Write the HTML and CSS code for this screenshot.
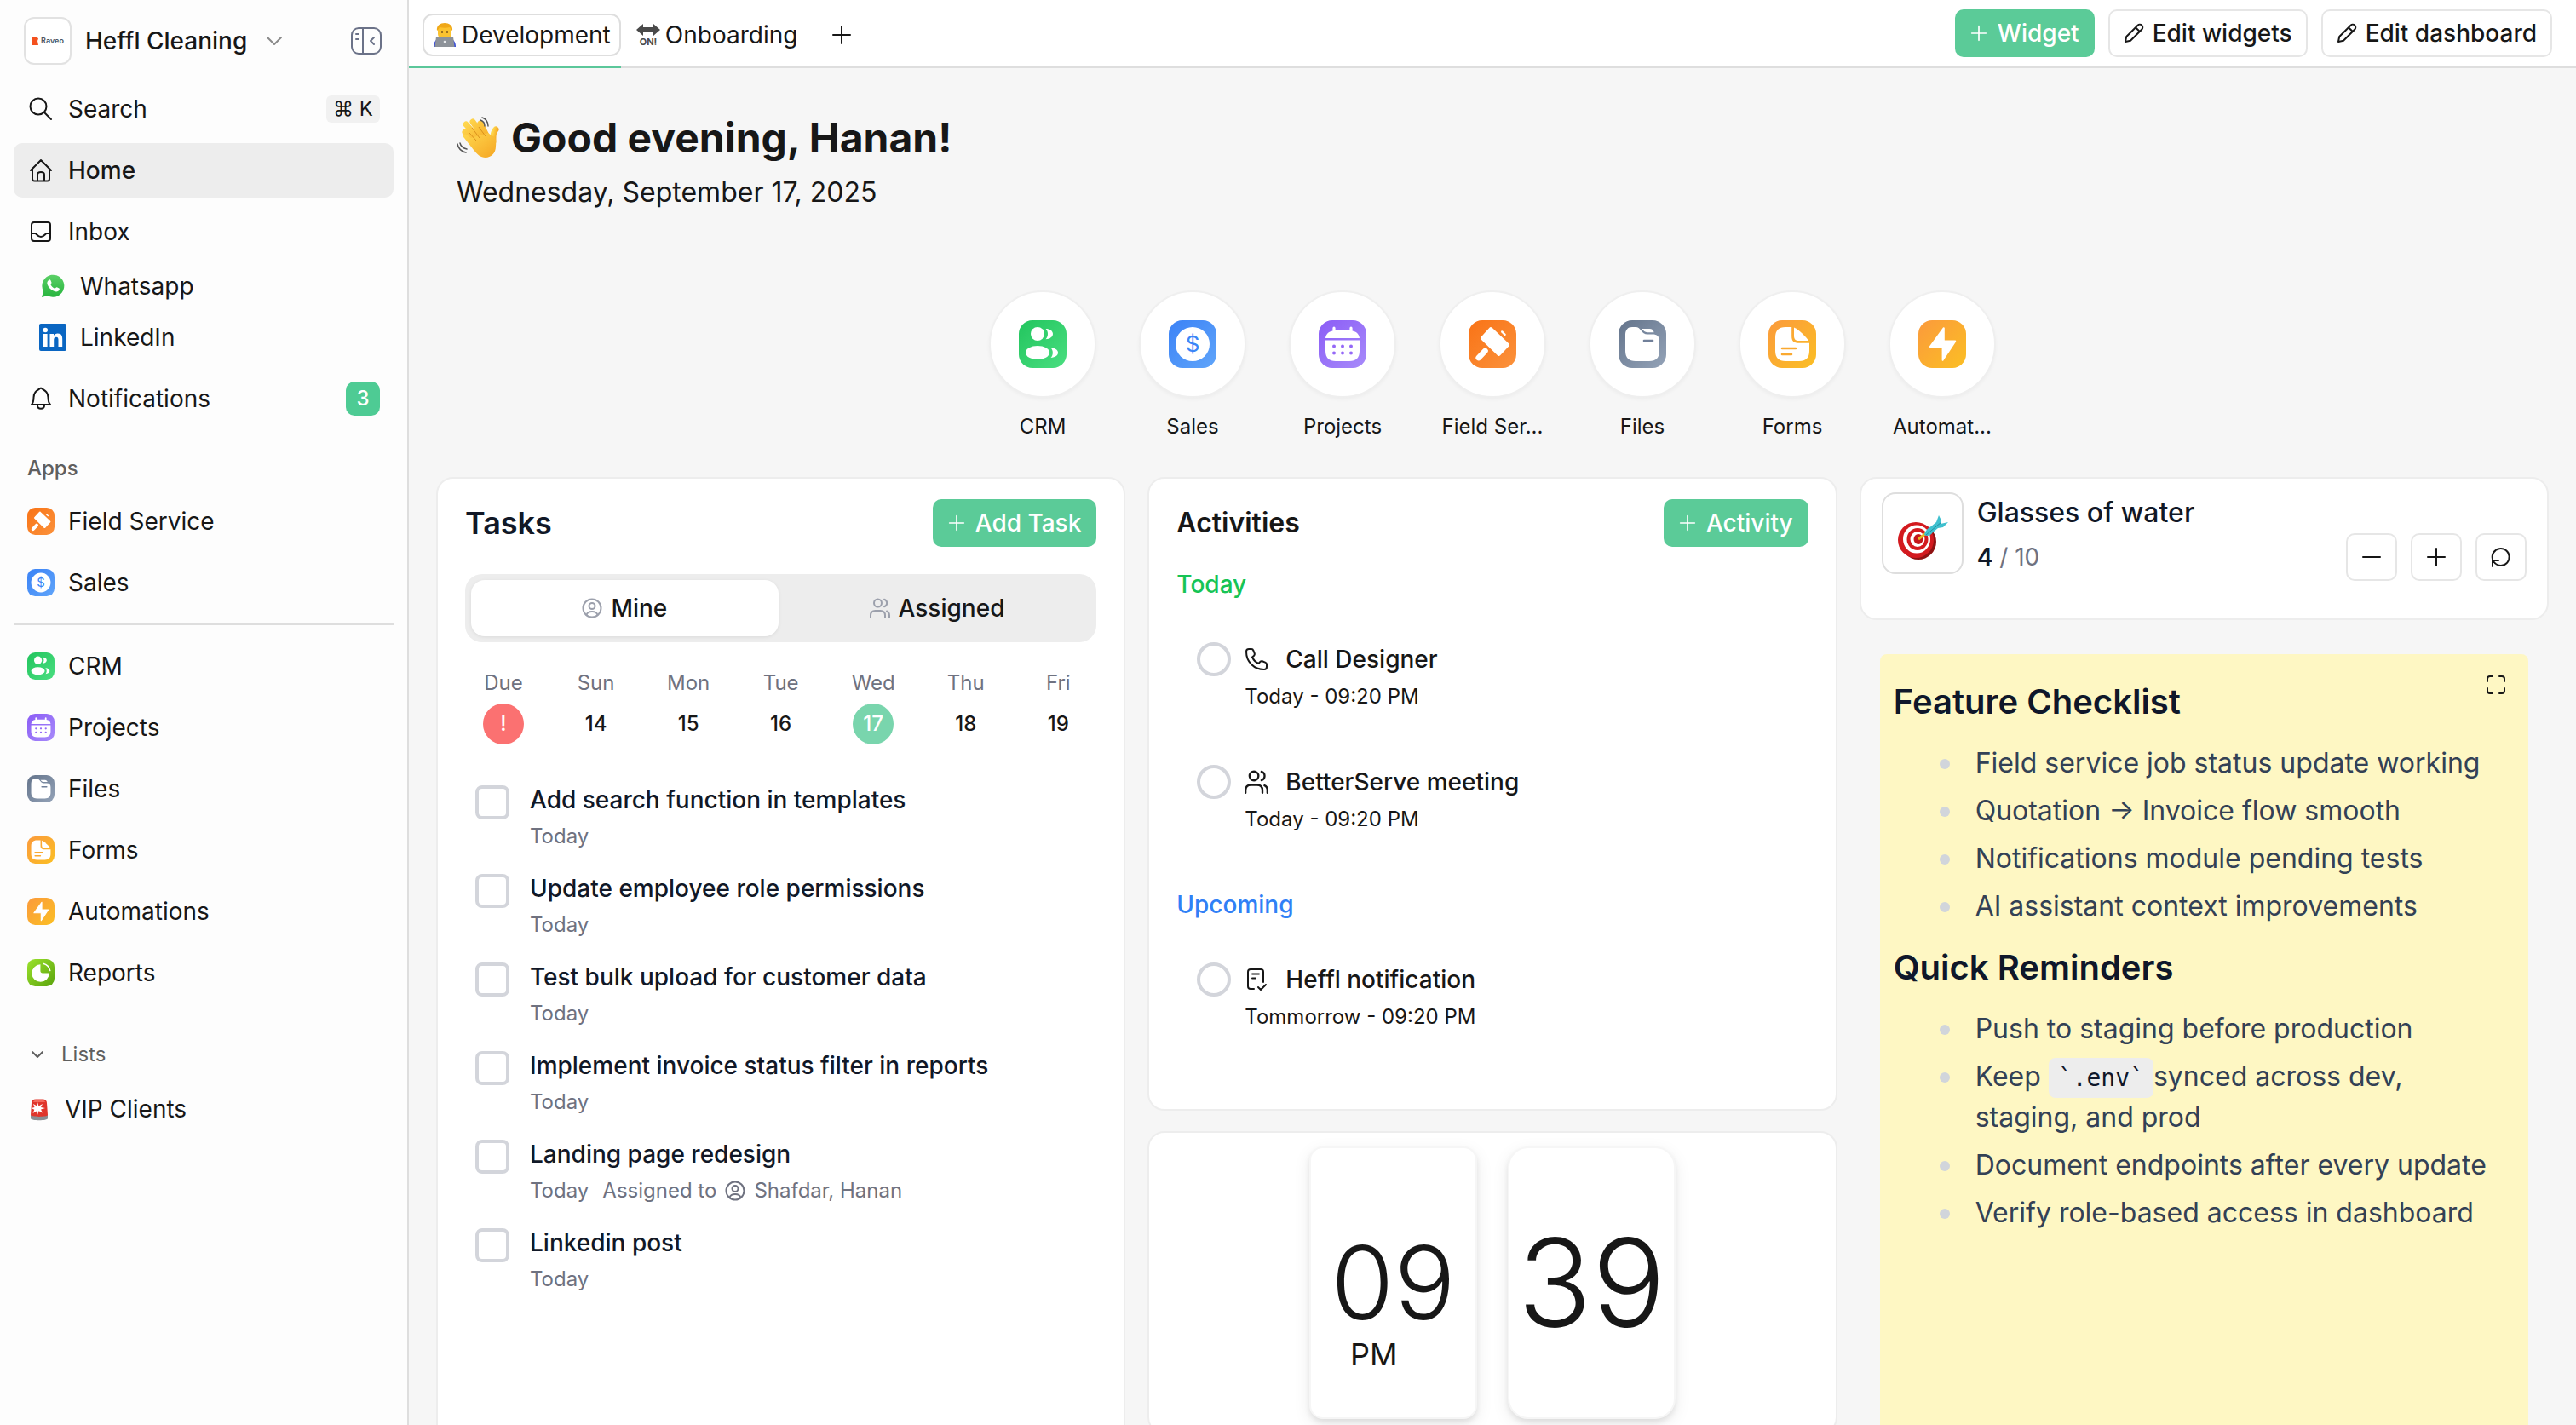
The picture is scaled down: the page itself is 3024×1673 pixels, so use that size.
FILE: index.html
```html
<!DOCTYPE html>
<html lang="en">

<head>
    <meta charset="UTF-8">
    <meta name="viewport" content="width=device-width, initial-scale=1.0">
    <title>Heffl Cleaning - Home</title>
    <link rel="stylesheet" href="styles.css">
</head>

<body>
    <!-- Shared icons -->
    <svg class="sprite" aria-hidden="true">
        <defs>
            <linearGradient id="g-green" x1="0" y1="0" x2="1" y2="1"><stop offset="0" stop-color="#22c55e"/><stop offset="1" stop-color="#4ade80"/></linearGradient>
            <linearGradient id="g-blue" x1="0" y1="0" x2="1" y2="1"><stop offset="0" stop-color="#3b82f6"/><stop offset="1" stop-color="#60a5fa"/></linearGradient>
            <linearGradient id="g-purple" x1="0" y1="0" x2="1" y2="1"><stop offset="0" stop-color="#8b5cf6"/><stop offset="1" stop-color="#a78bfa"/></linearGradient>
            <linearGradient id="g-orange" x1="0" y1="0" x2="1" y2="1"><stop offset="0" stop-color="#f97316"/><stop offset="1" stop-color="#fb923c"/></linearGradient>
            <linearGradient id="g-slate" x1="0" y1="0" x2="1" y2="1"><stop offset="0" stop-color="#64748b"/><stop offset="1" stop-color="#94a3b8"/></linearGradient>
            <linearGradient id="g-amber" x1="0" y1="0" x2="1" y2="1"><stop offset="0" stop-color="#fb9a3c"/><stop offset="1" stop-color="#fbbf24"/></linearGradient>
            <linearGradient id="g-lime" x1="0" y1="0" x2="1" y2="1"><stop offset="0" stop-color="#9be22d"/><stop offset="1" stop-color="#5ba30d"/></linearGradient>
            <linearGradient id="g-wa" x1="0" y1="0" x2="0" y2="1"><stop offset="0" stop-color="#5bd066"/><stop offset="1" stop-color="#27b43e"/></linearGradient>
            <linearGradient id="g-hand" x1="0" y1="0" x2="1" y2="1"><stop offset="0" stop-color="#ffd84f"/><stop offset="1" stop-color="#f5a623"/></linearGradient>
        </defs>
        <symbol id="app-crm" viewBox="0 0 28 28">
            <rect width="28" height="28" rx="8" fill="url(#g-green)"/>
            <g fill="#fff"><circle cx="11" cy="8" r="4"/><ellipse cx="11" cy="19" rx="7" ry="4"/>
            <path d="M15.800 5c2.400 0 4.200 1.300 4.200 3s-1.800 3.100-4.200 3.100c.8-.9 1.200-2 1.200-3.100s-.4-2.200-1.200-3z"/><path d="M18.600 16c2.600.2 4.400 1.400 4.400 3s-1.600 2.700-4.200 3c.8-.8 1.100-1.900 1.100-3s-.4-2.200-1.300-3z"/></g>
        </symbol>
        <symbol id="app-sales" viewBox="0 0 28 28">
            <rect width="28" height="28" rx="8" fill="url(#g-blue)"/>
            <circle cx="14" cy="14" r="10" fill="#fff"/>
            <text x="14" y="18.600" text-anchor="middle" font-size="13" fill="#3b86f7">$</text>
        </symbol>
        <symbol id="app-projects" viewBox="0 0 28 28">
            <rect width="28" height="28" rx="8" fill="url(#g-purple)"/>
            <path fill="#fff" d="M8.200 6.200V4.600a.8.8 0 0 1 1.600 0V6h8.400V4.600a.8.8 0 0 1 1.600 0v1.600c2.400.4 3.900 1.800 4.200 4.300H4c.3-2.500 1.800-3.900 4.200-4.300zM4 11.800h20V18c0 4-2 6-6 6h-8c-4 0-6-2-6-6z"/>
            <g fill="#9568f7"><circle cx="9" cy="15.200" r="1"/><circle cx="14" cy="15.200" r="1"/><circle cx="19" cy="15.200" r="1"/><circle cx="9" cy="19.200" r="1"/><circle cx="14" cy="19.200" r="1"/><circle cx="19" cy="19.200" r="1"/></g>
        </symbol>
        <symbol id="app-field" viewBox="0 0 28 28">
            <rect width="28" height="28" rx="8" fill="url(#g-orange)"/>
            <path fill="#fff" stroke="#fff" stroke-width="2" stroke-linejoin="round" d="M13 5l10 9.500-5.200 5.500L8 10.500z"/>
            <path stroke="#fff" stroke-width="3.400" stroke-linecap="round" d="M5.900 22l3.800-4"/>
            <path stroke="#fff" stroke-width="1.200" stroke-linecap="round" d="M19.600 6.700l1.700 1.700"/>
        </symbol>
        <symbol id="app-files" viewBox="0 0 28 28">
            <rect width="28" height="28" rx="8" fill="url(#g-slate)"/>
            <path fill="#fff" d="M4 8.500C4 5.700 5.400 4 8 4h2c3.300 0 3.300 4.300 7 4.300h3c2.600 0 4 1.300 4 4V18c0 4-2 6-6 6h-8c-4 0-6-2-6-6z"/>
            <path fill="#fff" d="M13.600 5h4.600c1.400 0 2.300.8 2.600 2.100H17c-1.500 0-2.400-1-3.400-2.100z"/>
            <path stroke="#71809a" stroke-width="1.300" stroke-linecap="round" d="M15 12h5"/>
        </symbol>
        <symbol id="app-forms" viewBox="0 0 28 28">
            <rect width="28" height="28" rx="8" fill="url(#g-amber)"/>
            <path fill="#fff" d="M13.600 4H10C6 4 4 6 4 10v8c0 4 2 6 6 6h8c4 0 6-2 6-6v-4.600h-6.200c-2.800 0-4.200-1-4.200-4z"/>
            <path fill="#fff" d="M15 4.200v4.800c0 2.200.8 3 3 3h5.600c-1.400-2.200-6.200-6.900-8.600-7.800z"/>
            <path stroke="#faa930" stroke-width="1.300" stroke-linecap="round" d="M8 16.500h8M8 20h5.500"/>
        </symbol>
        <symbol id="app-auto" viewBox="0 0 28 28">
            <rect width="28" height="28" rx="8" fill="url(#g-amber)"/>
            <path fill="#fff" stroke="#fff" stroke-linejoin="round" d="M14.900 4.600v7.700h6.700l-7.300 11.100v-7.900H6.900z"/>
        </symbol>
        <symbol id="app-reports" viewBox="0 0 28 28">
            <rect width="28" height="28" rx="8" fill="url(#g-lime)"/>
            <path fill="#fff" d="M13.500 5.500v6.800c0 1.300.9 2.200 2.200 2.200h7A9 9 0 1 1 13.500 5.500z"/>
            <path fill="none" stroke="#fff" stroke-width="1.200" stroke-linecap="round" d="M16.300 4.600c3.800.9 6.300 3.500 7.200 7.300"/>
        </symbol>
        <symbol id="i-plus" viewBox="0 0 24 24"><path d="M12 2v20M2 12h20"/></symbol>
        <symbol id="i-user" viewBox="0 0 24 24"><circle cx="12" cy="12" r="10.500"/><circle cx="12" cy="9.500" r="3.500"/><path d="M5.500 20c.8-3 3-4 6.500-4s5.700 1 6.500 4"/></symbol>
        <symbol id="i-users" viewBox="0 0 24 24"><circle cx="9.500" cy="6" r="4.500"/><path d="M1 23v-2.500c0-3.500 2-5.500 5.500-5.500h6c3.500 0 5.500 2 5.500 5.500V23M17 1.700a4.500 4.500 0 0 1 0 8.600M20 15.500c2 .8 3 2.500 3 5V23"/></symbol>
        <symbol id="i-pencil" viewBox="0 0 24 24"><path d="M2 22l1.200-6L16.500 2.700a3.300 3.300 0 0 1 4.800 4.800L8 20.800zM14 5.200l4.800 4.800"/></symbol>
    </svg>

    <div class="app">
        <!-- Sidebar -->
        <aside class="sidebar">
            <div class="workspace">
                <span class="logo">
                    <svg width="8" height="10" viewBox="0 0 8 10"><path fill="#f4511e" d="M0 0h6l2 2.500L7 5l1 5H0z"/></svg>
                    Raveo
                </span>
                <button class="workspace-name">Heffl Cleaning
                    <svg class="line muted" width="20" height="12" viewBox="0 0 20 12"><path d="M2 2l8 8 8-8"/></svg>
                </button>
                <button class="collapse" aria-label="Collapse sidebar">
                    <svg class="line" width="36" height="32" viewBox="0 0 36 32"><rect x="1" y="1" width="34" height="30" rx="8"/><path d="M14 1v30M6 8h3M6 14h3M27 12l-4 4 4 4"/></svg>
                </button>
            </div>
            <nav class="group">
                <a class="row" href="#">
                    <svg class="line" width="32" height="32" viewBox="0 0 32 32"><circle cx="13" cy="13" r="9.500"/><path d="M20 20l8 8"/></svg>
                    Search <kbd>⌘ K</kbd>
                </a>
                <a class="row active" href="#">
                    <svg class="line" width="32" height="32" viewBox="0 0 32 32"><path d="M4 16L16 4l12 12M6 14v12c0 1.500 1 2.500 2.500 2.500h15c1.500 0 2.500-1 2.500-2.500V14M12 28v-7c0-2 1-3 4-3s4 1 4 3v7"/></svg>
                    Home
                </a>
                <a class="row" href="#">
                    <svg class="line" width="32" height="32" viewBox="0 0 32 32"><rect x="5" y="5" width="22" height="22" rx="3"/><path d="M5 18h4c2 0 3 4 7 4s5-4 7-4h4"/></svg>
                    Inbox
                </a>
            </nav>
            <nav class="group subgroup">
                <a class="row" href="#">
                    <svg width="32" height="32" viewBox="0 0 32 32"><path fill="url(#g-wa)" d="M3 29l2-7A13 13 0 1 1 10 27z"/><path fill="#fff" d="M11 9c1-1 2-.8 2.500.3l1 2.400c.3.800-1.300 1.900-1 2.500 1 2.200 2.700 3.700 4.800 4.600.7.200 1.600-1.900 2.500-1.500l2.600 1.300c.9.500.4 1.700-.1 2.500-1.400 1.600-3.600 1.700-6 .7-4-1.700-6.500-4.600-7.800-8-.5-2 .2-3.700 1.500-4.800z"/></svg>
                    Whatsapp
                </a>
                <a class="row" href="#">
                    <svg width="32" height="32" viewBox="0 0 32 32"><rect width="32" height="32" rx="2" fill="#0a66c2"/><g fill="#fff"><circle cx="7.200" cy="7.500" r="2.800"/><path d="M4.800 12h4.800v15H4.800zM12.500 12H17v2.100c.8-1.500 2.600-2.500 4.800-2.500 4.400 0 5.400 2.900 5.400 6.700V27h-4.700v-7.600c0-1.900-.3-3.600-2.500-3.600s-2.800 1.700-2.800 3.700V27h-4.700z"/></g></svg>
                    LinkedIn
                </a>
            </nav>
            <nav class="group">
                <a class="row" href="#">
                    <svg class="line" width="32" height="32" viewBox="0 0 32 32"><path d="M5 23h22c-2.500-2.500-2.500-5-2.500-8.500C24.500 8 20.500 6.500 16 3.500 11.500 6.500 7.500 8 7.500 14.500c0 3.500 0 6-2.500 8.500zM12 24c0 5 8 5 8 0"/></svg>
                    Notifications <span class="badge">3</span>
                </a>
            </nav>
            <h2 class="side-title">Apps</h2>
            <nav class="group">
                <a class="row" href="#"><svg width="32" height="32"><use href="#app-field"/></svg>Field Service</a>
                <a class="row" href="#"><svg width="32" height="32"><use href="#app-sales"/></svg>Sales</a>
            </nav>
            <hr>
            <nav class="group">
                <a class="row" href="#"><svg width="32" height="32"><use href="#app-crm"/></svg>CRM</a>
                <a class="row" href="#"><svg width="32" height="32"><use href="#app-projects"/></svg>Projects</a>
                <a class="row" href="#"><svg width="32" height="32"><use href="#app-files"/></svg>Files</a>
                <a class="row" href="#"><svg width="32" height="32"><use href="#app-forms"/></svg>Forms</a>
                <a class="row" href="#"><svg width="32" height="32"><use href="#app-auto"/></svg>Automations</a>
                <a class="row" href="#"><svg width="32" height="32"><use href="#app-reports"/></svg>Reports</a>
            </nav>
            <button class="lists-toggle">
                <svg class="line" width="16" height="10" viewBox="0 0 16 10"><path d="M2 2l6 6 6-6"/></svg>
                Lists
            </button>
            <nav class="group">
                <a class="row" href="#">
                    <svg width="28" height="28" viewBox="0 0 28 28"><path fill="#8b8f94" d="M4 21h20v4c0 3-20 3-20 0z"/><path fill="#e0352b" d="M5 7c0-3 2-4.500 5-4.500h8c3 0 5 1.500 5 4.500l1 14c0 2.500-20 2.500-20 0z"/><path fill="#f4685c" d="M7 6c.4-1.600 2-2.200 4-2.200h6c2 0 3.600.6 4 2.200z"/><path fill="#fff" d="M12 6l1.500 4.500L18 8l-2 4 5 1-5 1.500 2 4-4.500-2.300L12 21l-1.200-4.500L6.500 19l1.800-4.200L4.500 13l4-1L7 8l4 2.300z"/></svg>
                    VIP Clients
                </a>
            </nav>
        </aside>

        <main class="main">
            <!-- Dashboard tabs -->
            <header class="topbar">
                <div class="tabs">
                    <div class="tab-wrap">
                        <button class="tab selected">
                            <svg width="28" height="28" viewBox="0 0 28 28"><path fill="#3b4fd8" d="M1 28c0-6 3-9 6-10h14c3 1 6 4 6 10z"/><rect x="6" y="2" width="16" height="17" rx="6" fill="#fcc32f"/><path fill="#f0a818" d="M5 9C4 3 9 0 14 0s10 3 9 9c-2-1-2-3-3-4-4 1-8 1-12 0-1 1-1 3-3 4z"/><circle cx="11" cy="10.500" r="1.200" fill="#5a3b12"/><circle cx="17" cy="10.500" r="1.200" fill="#5a3b12"/><path fill="#8d9299" d="M4 16h20l1.500 12h-23z"/><circle cx="14" cy="22" r="1.300" fill="#e6e8ea"/></svg>
                            Development
                        </button>
                    </div>
                    <button class="tab">
                        <svg width="28" height="28" viewBox="0 0 28 28"><path fill="#4a4a4a" d="M0 8l8-7v4h12V1l8 7-8 7v-4H8v4z"/><text x="14" y="26" text-anchor="middle" font-size="11" font-weight="700" fill="#4a4a4a">ON!</text></svg>
                        Onboarding
                    </button>
                    <button class="tab-add" aria-label="Add dashboard"><svg class="line" width="24" height="24"><use href="#i-plus"/></svg></button>
                </div>
                <div class="actions">
                    <button class="btn primary"><svg class="line" width="20" height="20"><use href="#i-plus"/></svg>Widget</button>
                    <button class="btn"><svg class="line" width="24" height="24"><use href="#i-pencil"/></svg>Edit widgets</button>
                    <button class="btn"><svg class="line" width="24" height="24"><use href="#i-pencil"/></svg>Edit dashboard</button>
                </div>
            </header>

            <!-- Greeting -->
            <section class="greeting">
                <h1>
                    <svg width="50" height="50" viewBox="0 0 50 50"><g fill="none" stroke="url(#g-hand)" stroke-linecap="round"><path stroke-width="7" d="M10 18l15 16M11 9l17 19M19 6l14 20M28 8l9 18"/><path stroke-width="7" d="M46 15c-4 4-3 9-3 14"/></g><path fill="url(#g-hand)" d="M9 25c-3-3 1-6 4-3l4 3 20-6 5 4c3-1 5 4 4 12 0 8-6 13-12 13-6 0-10-4-14-9z"/><g fill="none" stroke="#d9901c"><path d="M15 19l8 9M18 13l9 12M26 12l8 11"/></g><g fill="none" stroke="#555" stroke-width="1.500" stroke-linecap="round"><path d="M30 1c4 1 7 5 7 10M28 4c3 1 5 4 5 7M1 32c1 5 5 9 10 10M4 31c1 4 4 6 8 7"/></g></svg>
                    Good evening, Hanan!
                </h1>
                <p>Wednesday, September 17, 2025</p>
            </section>

            <nav class="shortcuts">
                <a href="#"><span class="bubble"><svg width="56" height="56"><use href="#app-crm"/></svg></span><span class="label">CRM</span></a>
                <a href="#"><span class="bubble"><svg width="56" height="56"><use href="#app-sales"/></svg></span><span class="label">Sales</span></a>
                <a href="#"><span class="bubble"><svg width="56" height="56"><use href="#app-projects"/></svg></span><span class="label">Projects</span></a>
                <a href="#"><span class="bubble"><svg width="56" height="56"><use href="#app-field"/></svg></span><span class="label">Field Ser...</span></a>
                <a href="#"><span class="bubble"><svg width="56" height="56"><use href="#app-files"/></svg></span><span class="label">Files</span></a>
                <a href="#"><span class="bubble"><svg width="56" height="56"><use href="#app-forms"/></svg></span><span class="label">Forms</span></a>
                <a href="#"><span class="bubble"><svg width="56" height="56"><use href="#app-auto"/></svg></span><span class="label">Automat...</span></a>
            </nav>

            <div class="widgets">
                <!-- Tasks -->
                <section class="card tasks">
                    <div class="card-head">
                        <h2 class="big">Tasks</h2>
                        <button class="btn primary"><svg class="line" width="20" height="20"><use href="#i-plus"/></svg>Add Task</button>
                    </div>
                    <div class="segmented">
                        <button class="on"><svg class="line" width="24" height="24"><use href="#i-user"/></svg>Mine</button>
                        <button><svg class="line" width="24" height="24"><use href="#i-users"/></svg>Assigned</button>
                    </div>
                    <div class="week">
                        <div class="day">Due<span class="late">!</span></div>
                        <div class="day">Sun<span>14</span></div>
                        <div class="day">Mon<span>15</span></div>
                        <div class="day">Tue<span>16</span></div>
                        <div class="day">Wed<span class="today">17</span></div>
                        <div class="day">Thu<span>18</span></div>
                        <div class="day">Fri<span>19</span></div>
                    </div>
                    <ul class="task-list">
                        <li><input type="checkbox" id="t1"><div><label for="t1">Add search function in templates</label><p>Today</p></div></li>
                        <li><input type="checkbox" id="t2"><div><label for="t2">Update employee role permissions</label><p>Today</p></div></li>
                        <li><input type="checkbox" id="t3"><div><label for="t3">Test bulk upload for customer data</label><p>Today</p></div></li>
                        <li><input type="checkbox" id="t4"><div><label for="t4">Implement invoice status filter in reports</label><p>Today</p></div></li>
                        <li><input type="checkbox" id="t5"><div><label for="t5">Landing page redesign</label><p>Today <span class="assignee">Assigned to <svg class="line" width="24" height="24"><use href="#i-user"/></svg> Shafdar, Hanan</span></p></div></li>
                        <li><input type="checkbox" id="t6"><div><label for="t6">Linkedin post</label><p>Today</p></div></li>
                    </ul>
                </section>

                <div class="column">
                    <!-- Activities -->
                    <section class="card activities">
                        <div class="card-head">
                            <h2>Activities</h2>
                            <button class="btn primary"><svg class="line" width="20" height="20"><use href="#i-plus"/></svg>Activity</button>
                        </div>
                        <h3 class="when green">Today</h3>
                        <ul class="activity-list">
                            <li>
                                <input type="checkbox" id="a1">
                                <div>
                                    <label for="a1"><svg class="line" width="28" height="28" viewBox="0 0 28 28"><path d="M2 5c0-2 1.500-3 3-3h3c1.200 0 2 .7 2.400 1.800l1.300 3.400c.4 1.200 0 2-.8 2.700L9 11.500c1.500 3.500 4 6 7.500 7.500l1.600-1.900c.7-.8 1.500-1.200 2.700-.8l3.400 1.300c1.100.4 1.800 1.200 1.800 2.400v3c0 1.500-1 3-3 3C11 26 2 17 2 5z"/></svg>Call Designer</label>
                                    <p>Today - 09:20 PM</p>
                                </div>
                            </li>
                            <li>
                                <input type="checkbox" id="a2">
                                <div>
                                    <label for="a2"><svg class="line" width="28" height="28"><use href="#i-users"/></svg>BetterServe meeting</label>
                                    <p>Today - 09:20 PM</p>
                                </div>
                            </li>
                        </ul>
                        <h3 class="when blue">Upcoming</h3>
                        <ul class="activity-list">
                            <li>
                                <input type="checkbox" id="a3">
                                <div>
                                    <label for="a3"><svg class="line" width="28" height="28" viewBox="0 0 28 28"><path d="M11 25H7c-1.700 0-3-1.300-3-3V5c0-1.700 1.300-3 3-3h12c1.700 0 3 1.300 3 3v12M9 7.500h8M9 12.500h4M16 23l3 3 6-6"/></svg>Heffl notification</label>
                                    <p>Tommorrow - 09:20 PM</p>
                                </div>
                            </li>
                        </ul>
                    </section>

                    <!-- Clock -->
                    <section class="card clock">
                        <div class="flip">
                            <span class="hours">09</span>
                            <span class="period">PM</span>
                        </div>
                        <div class="flip minutes-box">
                            <span class="minutes">39</span>
                        </div>
                    </section>
                </div>

                <div class="column">
                    <!-- Counter -->
                    <section class="card counter">
                        <span class="counter-icon">
                            <svg width="64" height="56" viewBox="0 0 64 56"><ellipse cx="27" cy="34" rx="21" ry="21" fill="#8f1212"/><ellipse cx="24" cy="32" rx="21" ry="21" fill="#d31a1f"/><ellipse cx="25" cy="31" rx="16" ry="16.500" fill="#fff"/><ellipse cx="26" cy="31" rx="12.500" ry="13" fill="#d31a1f"/><ellipse cx="26" cy="31" rx="8.500" ry="9" fill="#fff"/><ellipse cx="27" cy="31" rx="5.500" ry="6" fill="#c5161b"/><path stroke="#e8b923" stroke-width="3" d="M27 31l9-7"/><path fill="#3fc0cf" d="M34 26c1-5 4-8 8-10l6-5 3-8 3 6-1 4 9-2-6 6-6 1-6 5c-3 4-6 5-10 3z"/><path stroke="#1f8fa0" d="M36 26l18-15"/></svg>
                        </span>
                        <div class="counter-text">
                            <h2>Glasses of water</h2>
                            <p><strong>4</strong> / 10</p>
                        </div>
                        <div class="counter-buttons">
                            <button aria-label="Decrease"><svg class="line" width="24" height="24" viewBox="0 0 24 24"><path d="M2 12h20"/></svg></button>
                            <button aria-label="Increase"><svg class="line" width="24" height="24"><use href="#i-plus"/></svg></button>
                            <button aria-label="Reset"><svg class="line" width="24" height="24" viewBox="0 0 24 24"><path d="M2 14.500A10 10 0 1 1 12 22c-3.500 0-6.500-1.500-9-5M2 23v-7h7"/></svg></button>
                        </div>
                    </section>

                    <!-- Sticky note -->
                    <section class="note">
                        <button class="expand" aria-label="Expand note"><svg class="line" width="24" height="24" viewBox="0 0 24 24"><path d="M2 8V5c0-2 1-3 3-3h3M16 2h3c2 0 3 1 3 3v3M22 16v3c0 2-1 3-3 3h-3M8 22H5c-2 0-3-1-3-3v-3"/></svg></button>
                        <h2>Feature Checklist</h2>
                        <ul>
                            <li><span>Field service job status update working</span></li>
                            <li><span>Quotation → Invoice flow smooth</span></li>
                            <li><span>Notifications module pending tests</span></li>
                            <li><span>AI assistant context improvements</span></li>
                        </ul>
                        <h2>Quick Reminders</h2>
                        <ul>
                            <li><span>Push to staging before production</span></li>
                            <li><span>Keep <code>`.env`</code>synced across dev, staging, and prod</span></li>
                            <li><span>Document endpoints after every update</span></li>
                            <li><span>Verify role-based access in dashboard</span></li>
                        </ul>
                    </section>
                </div>
            </div>
        </main>
    </div>
</body>

</html>
```

FILE: styles.css
```css
* {
    box-sizing: border-box;
}

body {
    margin: 0;
    font-family: Inter, "Liberation Sans", sans-serif;
    font-size: 28px;
    line-height: 36px;
    color: #171717;
    background: #f6f6f6;
}

h1, h2, h3, p, ul {
    margin: 0;
    padding: 0;
}

ul {
    list-style: none;
}

a {
    color: inherit;
    text-decoration: none;
}

button {
    font: inherit;
    color: inherit;
    background: none;
    border: 0;
    padding: 0;
    cursor: pointer;
}

svg {
    flex: none;
    overflow: visible;
}

.sprite {
    position: absolute;
    width: 0;
    height: 0;
}

.line {
    fill: none;
    stroke: currentColor;
    stroke-width: 2;
    stroke-linecap: round;
    stroke-linejoin: round;
}

.muted {
    color: #8a8a8a;
}

.app {
    display: flex;
    height: 100vh;
    overflow: hidden;
}

/* Sidebar */
.sidebar {
    flex: none;
    width: 480px;
    padding: 20px 16px;
    background: #fdfdfd;
    border-right: 2px solid #dedede;
}

.workspace {
    display: flex;
    align-items: center;
    gap: 16px;
    padding: 0 14px 0 12px;
    margin-bottom: 20px;
}

.logo {
    display: flex;
    align-items: center;
    justify-content: center;
    gap: 3px;
    width: 56px;
    height: 56px;
    border: 2px solid #e2e2e2;
    border-radius: 12px;
    background: white;
    font-size: 9px;
    font-weight: 600;
    color: #4b5563;
}

.workspace-name {
    display: flex;
    align-items: center;
    gap: 22px;
    font-weight: 500;
}

.collapse {
    display: flex;
    margin-left: auto;
    color: #6b7288;
}

.group {
    display: flex;
    flex-direction: column;
    gap: 8px;
}

.row {
    display: flex;
    align-items: center;
    gap: 16px;
    height: 64px;
    padding: 0 16px;
    border-radius: 10px;
}

.row.active {
    background: #ededed;
    font-weight: 500;
}

.subgroup {
    gap: 4px;
    margin: 4px 0 12px;
}

.subgroup .row {
    height: 56px;
    padding-left: 30px;
}

kbd {
    margin-left: auto;
    padding: 0 8px;
    border-radius: 6px;
    background: #f1f1f1;
    font: inherit;
    font-size: 24px;
    line-height: 32px;
}

.badge {
    display: flex;
    align-items: center;
    justify-content: center;
    width: 40px;
    height: 40px;
    margin-left: auto;
    border-radius: 10px;
    background: #4ecb94;
    color: white;
    font-size: 24px;
    font-weight: 500;
}

.side-title {
    margin: 32px 0 12px;
    padding: 0 16px;
    font-size: 24px;
    font-weight: 500;
    color: #5f5f5f;
}

hr {
    margin: 16px 0;
    border: 0;
    border-top: 2px solid #dedede;
}

.lists-toggle {
    display: flex;
    align-items: center;
    gap: 20px;
    margin: 46px 0 14px;
    padding: 0 20px;
    font-size: 24px;
    color: #5f5f5f;
}

/* Top bar */
.main {
    flex: 1;
    min-width: 0;
}

.topbar {
    display: flex;
    align-items: center;
    height: 80px;
    padding-right: 28px;
    background: white;
    border-bottom: 2px solid #dedede;
}

.tabs {
    display: flex;
    align-items: center;
    align-self: stretch;
    padding-top: 4px;
}

.tab-wrap {
    align-self: stretch;
    padding: 12px 0 0 16px;
    margin-right: 6px;
    margin-bottom: -2px;
    border-bottom: 2px solid #5bc79a;
}

.tab {
    display: flex;
    align-items: center;
    gap: 6px;
    height: 50px;
    padding: 0 10px;
    border: 2px solid transparent;
    border-radius: 12px;
}

.tab.selected {
    border-color: #dedede;
}

.tab-add {
    display: flex;
    margin-left: 28px;
}

.actions {
    display: flex;
    gap: 16px;
    margin-left: auto;
}

.btn {
    display: flex;
    align-items: center;
    gap: 10px;
    height: 56px;
    padding: 0 16px;
    border: 2px solid #e6e6e6;
    border-radius: 10px;
    background: white;
    font-weight: 500;
}

.btn.primary {
    gap: 12px;
    padding: 0 18px;
    border: 0;
    background: #5bcb98;
    color: white;
}

/* Greeting */
.greeting {
    padding: 54px 56px 0;
}

.greeting h1 {
    display: flex;
    align-items: center;
    gap: 14px;
    font-size: 48px;
    line-height: 56px;
    font-weight: 700;
}

.greeting p {
    margin-top: 16px;
    font-size: 32px;
    line-height: 40px;
}

.shortcuts {
    display: flex;
    justify-content: center;
    gap: 50px;
    margin: 95px 0 43px;
}

.shortcuts a {
    display: flex;
    flex-direction: column;
    align-items: center;
    gap: 18px;
    width: 126px;
}

.bubble {
    display: flex;
    align-items: center;
    justify-content: center;
    width: 126px;
    height: 126px;
    border: 2px solid #efefef;
    border-radius: 50%;
    background: white;
    box-shadow: 0 2px 4px rgba(0, 0, 0, 0.04);
}

.label {
    font-size: 24px;
    line-height: 32px;
    white-space: nowrap;
}

/* Widgets */
.widgets {
    display: grid;
    grid-template-columns: repeat(3, minmax(0, 1fr));
    gap: 26px;
    padding: 0 32px;
}

.column {
    display: flex;
    flex-direction: column;
    gap: 24px;
}

.card {
    padding: 24px 32px;
    border: 2px solid #ededed;
    border-radius: 20px;
    background: white;
}

.card-head {
    display: flex;
    align-items: center;
    justify-content: space-between;
}

.card-head h2 {
    font-size: 32px;
    font-weight: 600;
}

.card-head .big {
    font-size: 36px;
    color: #111827;
}

.segmented {
    display: grid;
    grid-template-columns: 1fr 1fr;
    gap: 6px;
    height: 80px;
    margin-top: 32px;
    padding: 7px;
    border-radius: 20px;
    background: #ededed;
}

.segmented button {
    display: flex;
    align-items: center;
    justify-content: center;
    gap: 10px;
    border-radius: 16px;
    font-weight: 500;
}

.segmented .on {
    background: white;
    box-shadow: 0 1px 4px rgba(0, 0, 0, 0.08);
}

.segmented svg {
    color: #9ca0ac;
}

.week {
    display: flex;
    justify-content: space-between;
    margin-top: 32px;
    padding: 0 20px;
}

.day {
    display: flex;
    flex-direction: column;
    align-items: center;
    gap: 8px;
    width: 50px;
    font-size: 24px;
    line-height: 32px;
    color: #6f7280;
}

.day span {
    width: 48px;
    height: 48px;
    border-radius: 50%;
    line-height: 48px;
    text-align: center;
    font-weight: 500;
    color: #171717;
}

.day .late {
    background: #fb7171;
    color: white;
}

.day .today {
    background: #79d5ad;
    color: white;
}

.task-list {
    display: flex;
    flex-direction: column;
    gap: 28px;
    margin-top: 48px;
    padding-left: 12px;
}

.task-list li {
    display: flex;
    gap: 24px;
}

input[type="checkbox"] {
    flex: none;
    appearance: none;
    width: 40px;
    height: 40px;
    margin: 0;
    border: 4px solid #d3d5db;
    border-radius: 8px;
    background: white;
}

.task-list label {
    display: block;
    line-height: 34px;
    font-weight: 500;
    color: #111827;
}

.task-list p {
    display: flex;
    gap: 16px;
    margin-top: 10px;
    font-size: 24px;
    line-height: 32px;
    color: #6f7280;
}

.assignee {
    display: flex;
    align-items: center;
    gap: 10px;
}

/* Activities */
.activities {
    min-height: 744px;
}

.when {
    margin: 26px 0 50px;
    font-size: 28px;
    font-weight: 500;
}

.green {
    color: #16c455;
}

.blue {
    color: #3080f6;
}

.activity-list {
    display: flex;
    flex-direction: column;
    gap: 64px;
    padding-left: 24px;
    margin-bottom: 66px;
}

.activity-list li {
    display: flex;
    gap: 16px;
    height: 80px;
}

.activity-list input[type="checkbox"] {
    border-radius: 50%;
}

.activity-list label {
    display: flex;
    align-items: center;
    gap: 20px;
    margin-top: 2px;
    font-weight: 500;
}

.activity-list p {
    margin-top: 10px;
    font-size: 24px;
    line-height: 32px;
}

/* Clock */
.clock {
    display: flex;
    justify-content: center;
    gap: 36px;
    padding: 16px 32px;
}

.flip {
    display: grid;
    grid-template-rows: 1fr auto 1fr;
    width: 197px;
    height: 320px;
    border: 2px solid #f6f6f6;
    border-radius: 16px;
    background: white;
    box-shadow: 0 6px 20px rgba(0, 0, 0, 0.08), 0 4px 6px rgba(0, 0, 0, 0.08);
}

.minutes-box {
    border-radius: 24px;
}

.hours, .minutes {
    grid-row: 2;
    text-align: center;
    line-height: 128px;
    font-weight: 300;
}

.hours {
    font-size: 120px;
}

.minutes {
    font-size: 144px;
}

.period {
    grid-row: 3;
    margin-left: 46px;
    font-size: 36px;
    line-height: 40px;
}

/* Counter */
.counter {
    display: flex;
    align-items: flex-start;
    gap: 16px;
    min-height: 168px;
    padding: 16px 24px;
    color: #111827;
}

.counter-icon {
    display: flex;
    align-items: center;
    justify-content: center;
    width: 96px;
    height: 96px;
    padding-top: 8px;
    border: 2px solid #dedede;
    border-radius: 16px;
}

.counter-text {
    padding-top: 6px;
}

.counter-text h2 {
    font-size: 32px;
    font-weight: 500;
}

.counter-text p {
    margin-top: 16px;
    color: #6f7280;
}

.counter-text strong {
    font-weight: 600;
    color: #111827;
}

.counter-buttons {
    display: flex;
    gap: 16px;
    margin: 48px 0 0 auto;
}

.counter-buttons button {
    display: flex;
    align-items: center;
    justify-content: center;
    width: 60px;
    height: 56px;
    border: 2px solid #e6e6e6;
    border-radius: 10px;
    color: #171717;
}

/* Sticky note */
.note {
    position: relative;
    margin: 16px 24px 0;
    padding: 32px 16px;
    min-height: 960px;
    border-radius: 8px;
    background: #fef7c3;
}

.expand {
    display: flex;
    position: absolute;
    top: 24px;
    right: 26px;
}

.note h2 {
    font-size: 40px;
    line-height: 48px;
    font-weight: 600;
    color: #0f172a;
}

.note ul {
    display: flex;
    flex-direction: column;
    gap: 8px;
    margin: 24px 0;
    padding: 0 16px 0 54px;
}

.note li {
    display: flex;
    gap: 30px;
    font-size: 32px;
    line-height: 48px;
    color: #334155;
}

.note li::before {
    content: "";
    flex: none;
    width: 12px;
    height: 12px;
    margin-top: 19px;
    border-radius: 50%;
    background: #d1d5db;
}

.note code {
    padding: 7px 11px;
    border-radius: 8px;
    background: #ededed;
    font-family: "DejaVu Sans Mono", monospace;
    font-size: 28px;
    line-height: 36px;
    color: #0f172a;
}
```
